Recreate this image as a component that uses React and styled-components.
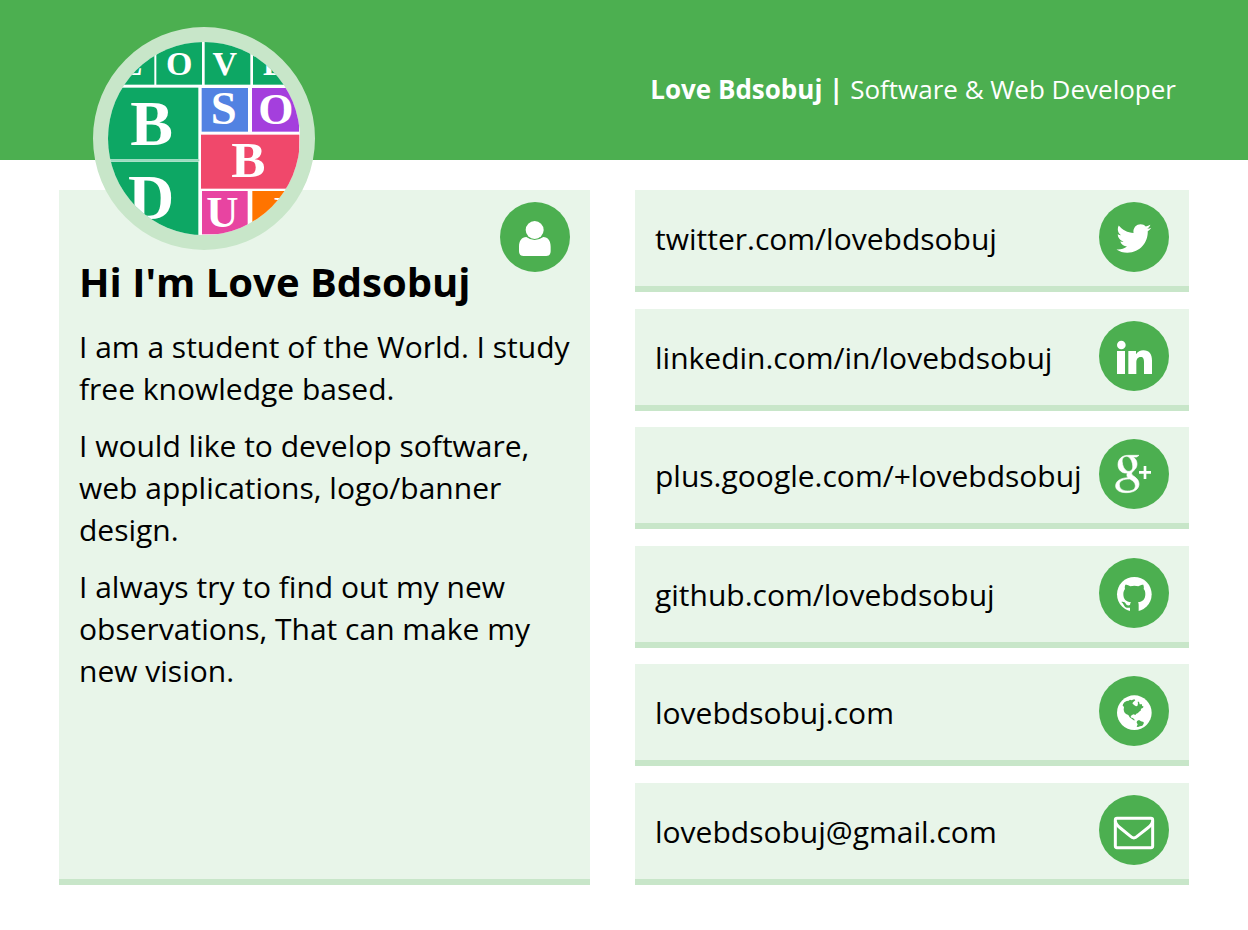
import React from "react";
import styled, { createGlobalStyle } from "styled-components";
import { FaTwitter, FaGithub } from "react-icons/fa";

const GlobalStyle = createGlobalStyle`
  * { box-sizing: border-box; }
  body {
    margin: 0;
    background: #fff;
    color: #000;
    font-family: "Open Sans", "Noto Sans", sans-serif;
    font-size: 30px;
    line-height: 42px;
  }
`;

const Header = styled.header`
  display: flex;
  align-items: flex-start;
  justify-content: space-between;
  height: 160px;
  padding: 27px 72px 0 93px;
  background: #4caf50;
`;

const Avatar = styled.div`
  position: relative;
  z-index: 1;
  flex: none;
  width: 222px;
  height: 223px;
  border: 15px solid #c8e6c9;
  border-radius: 50%;
  background: #fff;
  overflow: hidden;

  svg {
    display: block;
    width: 100%;
    height: 100%;
  }
`;

const Tagline = styled.p`
  margin: 44px 0 0;
  color: #fff;
  font-size: 26px;
  line-height: 36px;
`;

const Main = styled.main`
  display: grid;
  grid-template-columns: 531fr 554fr;
  gap: 45px;
  min-height: 695px;
  margin: 30px 59px 45px;
`;

const Card = styled.section`
  position: relative;
  padding: 64px 20px 20px;
  background: #e8f5e9;
  border-bottom: 6px solid #c8e6c9;
`;

const CardBadge = styled.div`
  position: absolute;
  top: 12px;
  right: 20px;
`;

const Title = styled.h1`
  margin: 0 0 16px;
  font-size: 40px;
  line-height: 56px;
`;

const Paragraph = styled.p`
  margin: 0 0 15px;
`;

const Links = styled.ul`
  display: flex;
  flex-direction: column;
  justify-content: space-between;
  margin: 0;
  padding: 0;
  list-style: none;
`;

const LinkRow = styled.li`
  display: flex;
  align-items: flex-start;
  justify-content: space-between;
  padding: 12px 20px 14px;
  background: #e8f5e9;
  border-bottom: 6px solid #c8e6c9;
`;

const ContactLink = styled.a`
  padding-top: 16px;
  color: inherit;
  text-decoration: none;
  white-space: nowrap;
`;

const RoundIcon = styled.svg`
  display: block;
  flex: none;
  width: 70px;
  height: 70px;
  border-radius: 50%;
  background: #4caf50;
  color: #fff;
  fill: #fff;
`;

const UserIcon = () => (
  <RoundIcon viewBox="30 36 210 210" aria-hidden="true">
    <circle cx="134" cy="120" r="27" />
    <path d="M109 141Q121 150 134 150T160 141C174 141 182 153 182 170V184Q182 198 169 198H100Q87 198 87 184V170C87 153 95 141 109 141Z" />
  </RoundIcon>
);

const TwitterIcon = () => (
  <RoundIcon viewBox="27 36 210 210" aria-hidden="true">
    <FaTwitter x="79" y="93" size={105} />
  </RoundIcon>
);

const LinkedinIcon = () => (
  <RoundIcon viewBox="27 33 210 210" aria-hidden="true">
    <circle cx="94" cy="105" r="13" />
    <path d="M81 123H105V192H81ZM115 123H138V133C143 125 151 121 160 121C178 121 186 132 186 152V192H162V158C162 147 160 141 152 141C143 141 139 148 139 158V192H115Z" />
  </RoundIcon>
);

const GooglePlusIcon = () => (
  <RoundIcon viewBox="27 27 210 210" aria-hidden="true">
    <path
      fillRule="evenodd"
      stroke="#fff"
      strokeWidth="2"
      d="M113 76H147L140 81H129C137 86 141 93 141 102C141 111 137 117 131 122C126 126 125 128 125 131C125 134 128 136 132 139C142 146 147 152 147 162C147 178 132 188 109 188C89 188 77 180 77 168C77 153 91 144 114 143C110 139 110 134 112 129C95 131 84 119 84 104C84 87 97 76 113 76ZM109 79C99 80 95 88 97 99C99 113 107 124 116 124C126 124 129 116 128 105C126 91 119 79 109 79ZM118 147C99 147 88 153 88 164C88 176 98 183 113 183C128 183 136 177 136 167C136 158 130 153 120 147Z"
    />
    <path d="M161 108H169V123H183V131H169V147H161V131H147V123H161Z" />
  </RoundIcon>
);

const GithubIcon = () => (
  <RoundIcon viewBox="27 30 210 210" aria-hidden="true">
    <circle cx="133" cy="139" r="52" />
    <path
      fill="#4caf50"
      d="M106 110C112 110 117 112 121 115Q133 112 145 115C149 112 155 110 160 110C162 116 162 120 161 123C165 127 166 132 166 138C166 154 158 161 144 163Q146 166 146 170V192H120V179C110 181 105 178 101 170Q98 164 94 162C100 160 105 163 108 168C111 173 115 173 120 171Q120 166 123 163C108 161 100 154 100 138C100 132 102 127 105 123C104 119 104 115 106 110Z"
    />
  </RoundIcon>
);

const GlobeIcon = () => (
  <RoundIcon viewBox="27 33 210 210" aria-hidden="true">
    <circle cx="133" cy="143" r="52" />
    <path
      fill="#4caf50"
      d="M103 112L110 108L116 107L120 104L124 106L133 103L136 106L130 111L127 115L132 120L138 124L142 123L144 116L143 110L147 110L149 118L156 118L156 122L161 125L158 129L153 131L152 137L147 140L144 144L139 146L136 150L131 148L126 150L122 154L124 158L129 159L132 163L136 166L131 166L125 161L119 157L115 150L108 147L103 142L101 134L102 125L98 123L99 118ZM141 168L147 165L153 169L161 171L161 176L157 182L150 184L144 186L140 185L143 178L140 173Z"
    />
  </RoundIcon>
);

const MailIcon = () => (
  <RoundIcon viewBox="27 30 210 210" aria-hidden="true">
    <g fill="none" stroke="#fff" strokeWidth="9" strokeLinejoin="round">
      <rect x="76" y="100" width="112" height="88" rx="5" />
      <path d="M76 108C77 117 82 122 91 129L119 152C129 161 134 161 144 152L173 129C182 122 187 117 188 108" />
    </g>
  </RoundIcon>
);

const tiles = [
  { x: 60, y: 60, w: 151, h: 133, fill: "#0da764" },
  { x: 217, y: 60, w: 137, h: 133, fill: "#0da764" },
  { x: 362, y: 60, w: 137, h: 133, fill: "#0da764" },
  { x: 507, y: 60, w: 150, h: 133, fill: "#0da764" },
  { x: 60, y: 202, w: 283, h: 215, fill: "#0da764" },
  { x: 60, y: 424, w: 283, h: 221, fill: "#0da764" },
  { x: 353, y: 203, w: 139, h: 131, fill: "#5282e2" },
  { x: 504, y: 203, w: 141, h: 131, fill: "#a43fdd" },
  { x: 351, y: 343, w: 295, h: 162, fill: "#f0486b" },
  { x: 354, y: 512, w: 137, h: 130, fill: "#e844a1" },
  { x: 505, y: 512, w: 150, h: 133, fill: "#ff7400" },
];

const letters = [
  { char: "L", x: 142, y: 163, size: 98 },
  { char: "O", x: 286, y: 164, size: 102 },
  { char: "V", x: 422, y: 164, size: 102 },
  { char: "E", x: 570, y: 163, size: 98 },
  { char: "B", x: 203, y: 373, size: 192 },
  { char: "D", x: 201, y: 597, size: 192 },
  { char: "S", x: 419, y: 311, size: 140 },
  { char: "O", x: 576, y: 311, size: 136 },
  { char: "B", x: 493, y: 470, size: 154 },
  { char: "U", x: 415, y: 619, size: 134 },
  { char: "J", x: 584, y: 619, size: 134 },
];

const Logo = () => (
  <svg viewBox="72 65 576 579" role="img" aria-label="Love Bdsobuj logo">
    {tiles.map((t) => (
      <rect key={`${t.x}-${t.y}`} x={t.x} y={t.y} width={t.w} height={t.h} fill={t.fill} />
    ))}
    <path d="M60 420H346" stroke="#9adbbf" strokeWidth="6" />
    <g fill="#fff" fontFamily='"Liberation Serif", serif' fontWeight="700" textAnchor="middle">
      {letters.map((l) => (
        <text key={`${l.x}-${l.y}`} x={l.x} y={l.y} fontSize={l.size}>
          {l.char}
        </text>
      ))}
    </g>
  </svg>
);

const contacts = [
  { text: "twitter.com/lovebdsobuj", href: "https://twitter.com/lovebdsobuj", Icon: TwitterIcon },
  { text: "linkedin.com/in/lovebdsobuj", href: "https://linkedin.com/in/lovebdsobuj", Icon: LinkedinIcon },
  { text: "plus.google.com/+lovebdsobuj", href: "https://plus.google.com/+lovebdsobuj", Icon: GooglePlusIcon },
  { text: "github.com/lovebdsobuj", href: "https://github.com/lovebdsobuj", Icon: GithubIcon },
  { text: "lovebdsobuj.com", href: "https://lovebdsobuj.com", Icon: GlobeIcon },
  { text: "lovebdsobuj@gmail.com", href: "mailto:lovebdsobuj@gmail.com", Icon: MailIcon },
];

export default function App() {
  return (
    <>
      <GlobalStyle />
      <Header>
        <Avatar>
          <Logo />
        </Avatar>
        <Tagline>
          <strong>Love Bdsobuj |</strong> Software &amp; Web Developer
        </Tagline>
      </Header>
      <Main>
        <Card>
          <CardBadge>
            <UserIcon />
          </CardBadge>
          <Title>Hi I'm Love Bdsobuj</Title>
          <Paragraph>I am a student of the World. I study free knowledge based.</Paragraph>
          <Paragraph>I would like to develop software, web applications, logo/banner design.</Paragraph>
          <Paragraph>
            I always try to find out my new observations, That can make my new vision.
          </Paragraph>
        </Card>
        <Links>
          {contacts.map(({ text, href, Icon }) => (
            <LinkRow key={text}>
              <ContactLink href={href}>{text}</ContactLink>
              <Icon />
            </LinkRow>
          ))}
        </Links>
      </Main>
    </>
  );
}
